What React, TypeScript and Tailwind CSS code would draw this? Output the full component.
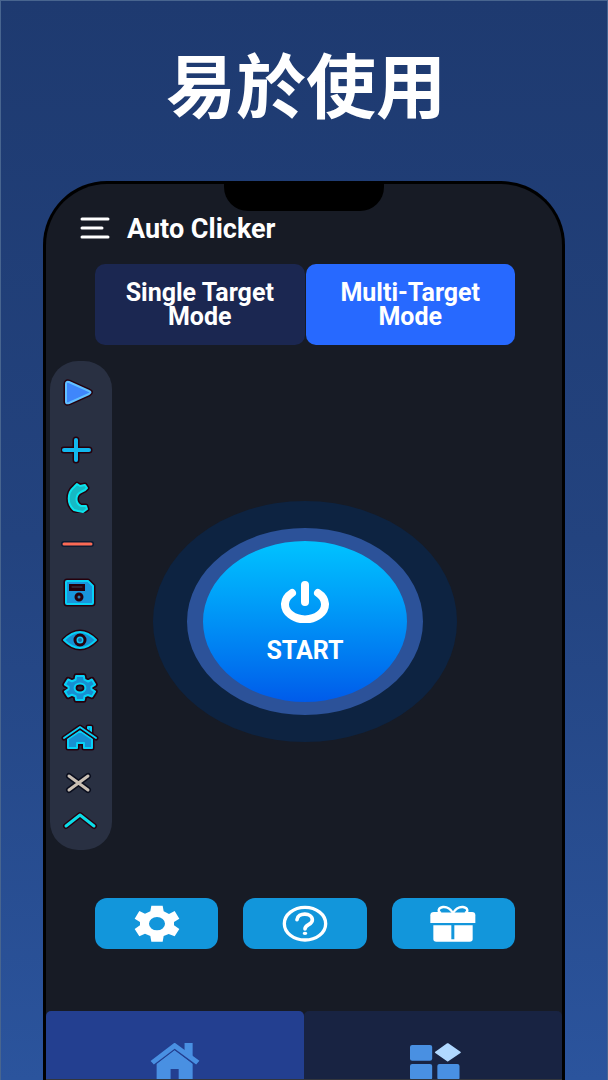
import * as React from 'react';

const GEAR_PATH =
  'M213 79H247L250 96L266 104L283 95L297 118L281 128V138L297 149L283 171L265 164L250 170L247 187H213L210 170L194 163L177 171L163 149L179 138V128L163 118L177 95L194 103L210 96ZM206 133a24 20 0 1 0 48 0a24 20 0 1 0-48 0Z';

function ToolIcon({ children }: { children: React.ReactNode }) {
  return (
    <svg
      viewBox="0 0 40 32"
      className="h-8 w-10"
      fill="none"
      strokeLinecap="round"
      strokeLinejoin="round"
      aria-hidden="true"
    >
      {children}
    </svg>
  );
}

// Every floating tool is a bright shape on top of a thicker dark outline
function Outlined({
  d,
  fill = 'none',
  stroke = '#08d0f5',
  outline = '#25000c',
  width = 2,
}: {
  d: string;
  fill?: string;
  stroke?: string;
  outline?: string;
  width?: number;
}) {
  return (
    <>
      <path d={d} stroke={outline} strokeWidth={width + 3} />
      <path d={d} stroke={stroke} strokeWidth={width} fill={fill} fillRule="evenodd" />
    </>
  );
}

const tools = [
  {
    label: 'Play',
    size: 'h-16',
    icon: <Outlined d="M5 7Q5 4 8 5L28 14Q31 15 28 17L8 26Q5 27 5 25Z" fill="#3f86fb" stroke="#62c0ff" />,
  },
  {
    label: 'Add target',
    size: 'h-12',
    icon: <Outlined d="M3 17H28M15 7V27" stroke="#12b8ee" width={4} />,
  },
  {
    label: 'Add swipe',
    size: 'h-12',
    icon: (
      <Outlined
        d="M13 6L16 3L19 5L24 4L26 7L24 9L20 11C14 14 14 22 20 25L25 25L26 28L22 31L17 30L13 29C6 23 6 12 13 6Z"
        fill="#16b9c4"
        stroke="#0be4ee"
      />
    ),
  },
  {
    label: 'Remove target',
    size: 'h-12',
    icon: <Outlined d="M3 15H30" stroke="#fb6a55" outline="#0c1b33" width={3} />,
  },
  {
    label: 'Save',
    size: 'h-12',
    icon: (
      <>
        <Outlined d="M6 4H27L32 9V26Q32 27 31 27H6Q5 27 5 26V5Q5 4 6 4Z" fill="#1995dc" />
        <rect x="8" y="7" width="16" height="7" fill="#25000c" />
        <path d="M11 10H21" stroke="#3d4350" />
        <circle cx="18" cy="20" r="3" stroke="#25000c" strokeWidth="3" fill="#2c7db0" />
      </>
    ),
  },
  {
    label: 'Show or hide targets',
    size: 'h-12',
    icon: (
      <>
        <Outlined d="M3 15Q11 7 19 7T35 15Q27 23 19 23T3 15Z" fill="#168fd2" />
        <circle cx="19" cy="15" r="5" stroke="#25000c" strokeWidth="3" fill="#14c6f5" />
        <circle cx="19" cy="15" r="2" fill="#1c6fa8" />
      </>
    ),
  },
  {
    label: 'Tool settings',
    size: 'h-12',
    icon: (
      <svg x="1" y="0" width="36" height="30" viewBox="150 66 160 134" preserveAspectRatio="none">
        <path d={GEAR_PATH} stroke="#25000c" strokeWidth="24" />
        <path d={GEAR_PATH} fill="#168fd2" fillRule="evenodd" stroke="#08d0f5" strokeWidth="9" />
      </svg>
    ),
  },
  {
    label: 'Home screen',
    size: 'h-12',
    icon: (
      <>
        <Outlined d="M27 12V6H30V14" fill="#168fd2" />
        <Outlined d="M7 18L19 10L31 18V27H23V22H16V27H7Z" fill="#168fd2" />
        <Outlined d="M3 17L19 6L35 17" />
      </>
    ),
  },
  {
    label: 'Close',
    size: 'h-12',
    icon: <Outlined d="M8 7L27 21M27 7L8 21" stroke="#c9bfb4" outline="#090d1d" width={3} />,
  },
  {
    label: 'Collapse',
    size: 'h-6',
    icon: <Outlined d="M5 21L19 10L33 21" stroke="#0bdce8" width={3} />,
  },
];

const actions = [
  {
    label: 'Settings',
    icon: (
      <svg viewBox="161 77 138 111" preserveAspectRatio="none" className="h-[37px] w-[46px]" aria-hidden="true">
        <path d={GEAR_PATH} fill="white" fillRule="evenodd" />
      </svg>
    ),
  },
  {
    label: 'Help',
    icon: (
      <svg
        viewBox="607 77 138 111"
        preserveAspectRatio="none"
        className="h-[37px] w-[46px]"
        fill="none"
        stroke="white"
        strokeLinecap="round"
        aria-hidden="true"
      >
        <ellipse cx="676" cy="133" rx="62" ry="49" strokeWidth="10" />
        <path d="M652 121C654 98 698 99 698 122C698 137 676 135 676 149" strokeWidth="11" />
        <ellipse cx="676" cy="162" rx="7" ry="5" fill="white" stroke="none" />
      </svg>
    ),
  },
  {
    label: 'Rewards',
    icon: (
      <svg viewBox="1052 77 138 111" preserveAspectRatio="none" className="h-[37px] w-[46px]" aria-hidden="true">
        <path d="M1053 108Q1053 98 1064 98H1178Q1188 98 1188 108V131H1053Z" fill="white" />
        <path d="M1062 138H1116V180H1125V138H1180V180Q1180 187 1171 187H1071Q1062 187 1062 180Z" fill="white" />
        <path
          d="M1121 101C1112 86 1102 82 1091 83C1076 85 1074 97 1085 101M1121 101C1130 86 1140 82 1151 83C1166 85 1168 97 1157 101"
          fill="#1296db"
          stroke="white"
          strokeWidth="7"
        />
        <path d="M1085 102H1157" stroke="white" strokeWidth="5" />
      </svg>
    ),
  },
];

export default function App() {
  return (
    <div className="flex min-h-screen flex-col border-x border-t border-[#48658f] bg-linear-to-b from-[#1e3a70] via-[#23437f] to-[#2b549d] font-[Roboto,'Noto_Sans_CJK_TC',sans-serif] text-white">
      <h1 className="pt-8 pl-1 text-center font-['Noto_Sans_CJK_TC',sans-serif] text-[70px] leading-[100px] font-bold">
        易於使用
      </h1>

      <div className="mx-[42px] mt-12 flex flex-1 flex-col overflow-hidden rounded-t-[64px] border-x-[3px] border-t-[3px] border-black bg-[#171b25]">
        <div className="mx-auto h-[27px] w-40 rounded-b-[24px] bg-black" />

        <header className="flex h-9 items-center gap-4 pl-[33px]">
          <button type="button" aria-label="Menu">
            <svg viewBox="0 0 32 24" className="h-6 w-8" stroke="white" strokeWidth="3" strokeLinecap="round">
              <path d="M3 2H29M3 11H23M3 20H29" />
            </svg>
          </button>
          <h2 className="text-[27px] leading-8 font-bold">Auto Clicker</h2>
        </header>

        <div className="mt-[17px] mr-[47px] ml-[49px] grid grid-cols-2 gap-px text-center text-[25px] leading-6 font-bold">
          <button type="button" className="min-h-[81px] rounded-[10px] bg-[#1b2751] px-6 py-4">
            Single Target Mode
          </button>
          <button type="button" className="min-h-[81px] rounded-[10px] bg-[#2769ff] px-6 py-4">
            Multi-Target Mode
          </button>
        </div>

        <main className="mt-4 grid grid-cols-[62px_1fr_60px] items-center px-1">
          <div
            role="toolbar"
            aria-label="Floating controls"
            className="flex flex-col items-center rounded-[28px] bg-[#293042] pb-[17px]"
          >
            {tools.map((tool) => (
              <button
                key={tool.label}
                type="button"
                aria-label={tool.label}
                className={`flex items-center justify-center ${tool.size}`}
              >
                <ToolIcon>{tool.icon}</ToolIcon>
              </button>
            ))}
          </div>

          <div className="mx-auto mt-8 rounded-[50%] bg-[#0d2341] px-[34px] py-[27px]">
            <button
              type="button"
              className="flex h-[187px] w-[236px] flex-col items-center justify-center gap-4 rounded-[50%] border-x-[16px] border-y-[13px] border-[#2c5299] bg-linear-to-b from-[#00c3ff] to-[#005bea] text-[25px] leading-6 font-bold"
            >
              <svg
                viewBox="0 0 50 42"
                className="h-[42px] w-[50px]"
                fill="none"
                stroke="white"
                strokeWidth="8"
                strokeLinecap="round"
                aria-hidden="true"
              >
                <path d="M25 4V21M12 12A20 15 0 1 0 38 12" />
              </svg>
              START
            </button>
          </div>
        </main>

        <div className="mt-12 mr-[47px] ml-[49px] grid grid-cols-3 gap-[25px]">
          {actions.map((action) => (
            <button
              key={action.label}
              type="button"
              aria-label={action.label}
              className="flex h-[51px] items-center justify-center rounded-xl bg-[#1296db]"
            >
              {action.icon}
            </button>
          ))}
        </div>

        <nav className="mt-auto grid grid-cols-2 border-b border-[#33363d]">
          <a href="#home" aria-label="Home" className="flex h-[68px] items-end justify-center rounded-t-[5px] bg-[#233f90]">
            <svg viewBox="325 129 136 108" preserveAspectRatio="none" className="h-9 w-[50px]" aria-hidden="true">
              <path d="M343 191L392 149L441 191V237H403V207H381V237H343Z" fill="#4990e2" />
              <path d="M331 188L392 137L455 188" fill="none" stroke="#233f90" strokeWidth="21" />
              <path d="M331 188L392 137L455 188" fill="none" stroke="#4990e2" strokeWidth="14" />
              <path d="M419 129H441V172L419 154Z" fill="#4990e2" />
            </svg>
          </a>
          <a
            href="#apps"
            aria-label="Apps"
            className="flex h-[68px] items-end justify-center rounded-t-[5px] bg-[#182342] pl-1"
          >
            <svg
              viewBox="1031 129 138 108"
              preserveAspectRatio="none"
              className="h-9 w-[51px]"
              fill="#4990e2"
              aria-hidden="true"
            >
              <rect x="1031" y="135" width="60" height="47" rx="6" />
              <rect x="1031" y="192" width="60" height="47" rx="6" />
              <rect x="1105" y="192" width="60" height="47" rx="6" />
              <path
                d="M1133 132L1166 157L1133 182L1101 157Z"
                fill="#b0d8ff"
                stroke="#b0d8ff"
                strokeWidth="5"
                strokeLinejoin="round"
              />
            </svg>
          </a>
        </nav>
      </div>
    </div>
  );
}
